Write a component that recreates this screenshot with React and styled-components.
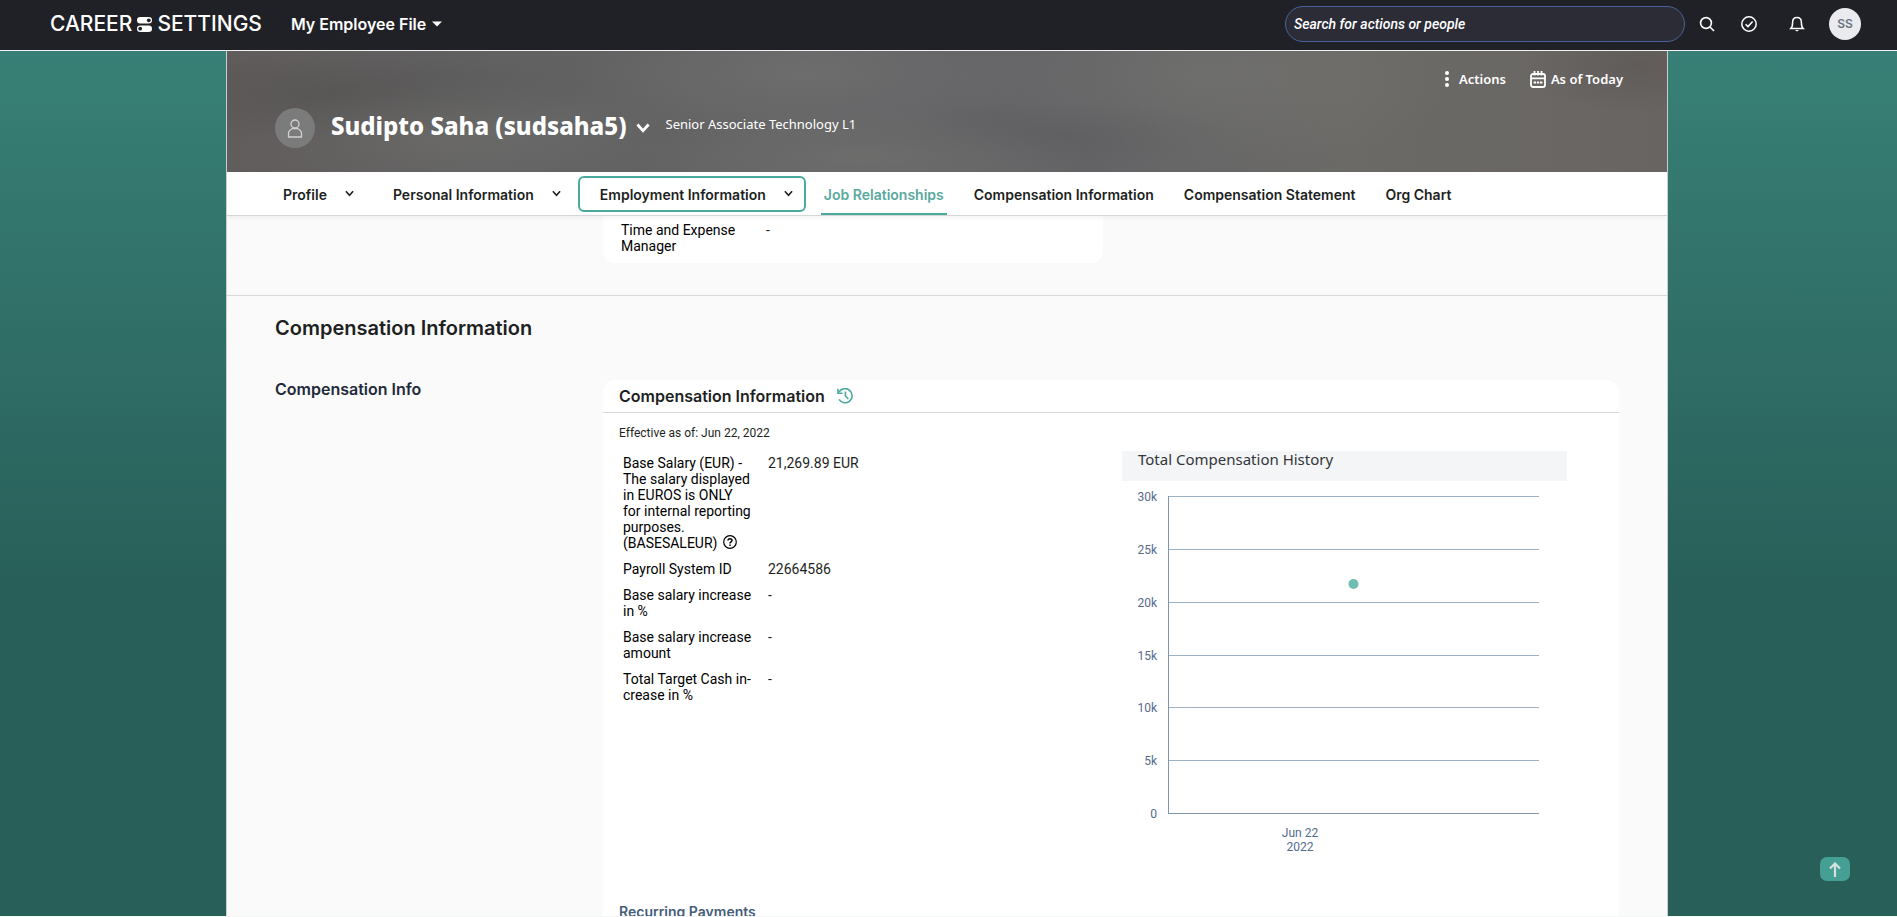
import React from "react";
import styled, { createGlobalStyle } from "styled-components";

const body = `Roboto, "Liberation Sans", sans-serif`;
const strong = `Inter, "Liberation Sans", sans-serif`;
const humanist = `"Noto Sans", "Open Sans", sans-serif`;
const teal = "#4aa99d";

const GlobalStyle = createGlobalStyle`
  * { box-sizing: border-box; }
  body { margin: 0; background: #f5f6f6; font-family: ${body}; color: #1d1f22; }
  h1, h2, h3, h4, p, dl, dd, dt, figure { margin: 0; font-weight: inherit; font-size: inherit; }
  button { border: 0; padding: 0; background: none; font: inherit; color: inherit; cursor: pointer; }
  svg { display: block; flex: none; }
`;

const Page = styled.div`
  height: 100vh;
  padding-bottom: 1px;
  display: flex;
  flex-direction: column;
  overflow: hidden;
`;

const Header = styled.header`
  flex: none;
  height: 51px;
  padding: 0 36px 2px 50px;
  display: flex;
  align-items: center;
  background: #202127;
  border-bottom: 1px solid #f2f2f2;
  color: #fff;
`;

const Logo = styled.a`
  display: flex;
  align-items: center;
  gap: 5px;
  color: #fff;
  text-decoration: none;
  font: 500 21px/24px ${strong};
`;

const ModuleButton = styled.button`
  margin-left: 29px;
  display: flex;
  align-items: center;
  gap: 6px;
  font: 600 16px/24px ${strong};
`;

const HeaderTools = styled.div`
  margin-left: auto;
  display: flex;
  align-items: center;
`;

const SearchInput = styled.input`
  width: 400px;
  height: 36px;
  margin-right: 6px;
  padding: 0 8px;
  border: 1px solid #4a629a;
  border-radius: 18px;
  background: #2c2c37;
  color: #fff;
  font: italic 500 14px/20px ${body};
  &::placeholder { color: #fff; opacity: 1; }
`;

const IconButton = styled.button`
  width: 32px;
  height: 32px;
  margin-right: ${(p) => p.$after}px;
  display: grid;
  place-items: center;
`;

const UserBadge = styled.button`
  width: 32px;
  height: 32px;
  border-radius: 50%;
  background: #e9ebee;
  color: #6a7280;
  font: 600 12px/32px ${strong};
`;

const Backdrop = styled.div`
  flex: 1;
  min-height: 0;
  padding: 0 229px 0 226px;
  background: linear-gradient(180deg, #388077 0%, #367c73 8%, #285f59 62%, #285f59 100%);
`;

const Panel = styled.main`
  height: 100%;
  overflow: hidden;
  border: solid #c9cfce;
  border-width: 0 1px;
  background: #fafafa;
`;

const Hero = styled.section`
  height: 121px;
  padding: 18px 44px 24px 48px;
  display: flex;
  flex-direction: column;
  justify-content: space-between;
  color: #fff;
  background:
    radial-gradient(ellipse 16% 60% at 40% 18%, rgba(132, 132, 130, 0.3), transparent),
    radial-gradient(ellipse 14% 50% at 17% 70%, rgba(126, 126, 122, 0.28), transparent),
    radial-gradient(ellipse 18% 40% at 8% 35%, rgba(74, 73, 72, 0.4), transparent),
    radial-gradient(ellipse 16% 40% at 44% 88%, rgba(124, 123, 118, 0.4), transparent),
    radial-gradient(ellipse 12% 30% at 58% 70%, rgba(84, 84, 86, 0.3), transparent),
    radial-gradient(ellipse 18% 80% at 68% 20%, rgba(124, 124, 118, 0.35), transparent),
    radial-gradient(ellipse 8% 40% at 98% 12%, rgba(84, 78, 76, 0.4), transparent),
    linear-gradient(90deg, #615d5c 0%, #626161 14%, #636365 40%, #646467 60%, #6b6a67 78%, #686461 100%);
`;

const HeroActions = styled.div`
  display: flex;
  justify-content: flex-end;
  gap: 24px;
`;

const HeroAction = styled.button`
  display: flex;
  align-items: center;
  gap: ${(p) => p.$gap}px;
  font: 600 13px/20px ${humanist};
`;

const Identity = styled.div`
  display: flex;
  align-items: center;
  height: 40px;
`;

const Avatar = styled.span`
  width: 40px;
  height: 40px;
  margin-right: 16px;
  border-radius: 50%;
  display: grid;
  place-items: center;
  background: #7b7b7b;
`;

const Name = styled.h1`
  font: 800 24px/36px ${humanist};
  padding-bottom: 4px;
`;

const NameMenu = styled.button`
  margin: 0 16px 0 9px;
`;

const Role = styled.p`
  font: 400 13px/20px ${humanist};
  padding-bottom: 8px;
`;

const Tabs = styled.nav`
  position: relative;
  height: 44px;
  padding: 4px 0 0 34px;
  display: flex;
  align-items: flex-start;
  background: #fff;
  border-bottom: 1px solid #d6d6d6;
  box-shadow: 0 2px 4px rgba(0, 0, 0, 0.05);
  font: 600 14px/20px ${strong};
  color: #1d1f22;
`;

const MenuTab = styled.button`
  height: 36px;
  padding: 2px 11px 0 20px;
  margin-right: ${(p) => (p.$focused ? 15 : 4)}px;
  display: flex;
  align-items: center;
  gap: 18px;
  border: 2px solid ${(p) => (p.$focused ? teal : "transparent")};
  border-radius: 6px;
  svg { margin-bottom: 3px; }
`;

const LinkTab = styled.a`
  height: 39px;
  padding: 9px 3px 0;
  margin-right: 24px;
  color: ${(p) => (p.$current ? "#5aa99e" : "inherit")};
  border-bottom: 2px solid ${(p) => (p.$current ? teal : "transparent")};
  text-decoration: none;
`;

const Section = styled.section`
  display: grid;
  grid-template-columns: 328px 1fr;
  padding: 0 48px;
`;

const PreviousSection = styled(Section)`
  height: 80px;
  border-bottom: 1px solid #d9d9d9;
`;

const SmallCard = styled.div`
  grid-column: 2;
  width: 500px;
  height: 47px;
  padding: 6px 18px;
  background: #fff;
  border-radius: 0 0 12px 12px;
`;

const FieldList = styled.dl`
  display: grid;
  grid-template-columns: 129px auto;
  justify-content: start;
  gap: 10px 16px;
  font: 400 14px/16px ${body};
  dt { color: #000; }
`;

const HelpButton = styled.button`
  display: inline-block;
  vertical-align: top;
  margin-left: 6px;
`;

const SectionTitle = styled.h2`
  padding: 20px 48px 40px;
  font: 600 20px/24px ${strong};
`;

const SubTitle = styled.h3`
  font: 600 16px/18px ${strong};
  color: #22293a;
`;

const Card = styled.article`
  background: #fff;
  border-radius: 12px 12px 0 0;
`;

const CardHeader = styled.header`
  height: 33px;
  padding: 0 16px;
  display: flex;
  align-items: center;
  gap: 12px;
  border-bottom: 1px solid #d9d9d9;
  font: 600 16px/20px ${strong};
`;

const CardBody = styled.div`
  padding: 12px 52px 24px 16px;
`;

const Effective = styled.p`
  font: 400 12px/16px ${body};
`;

const Columns = styled.div`
  display: flex;
  justify-content: space-between;
  padding: 10px 0 0 4px;
`;

const Fields = styled.div`
  padding-top: 4px;
`;

const Chart = styled.figure`
  width: 445px;
`;

const ChartTitle = styled.figcaption`
  height: 30px;
  padding-left: 16px;
  background: #f4f5f7;
  color: #32363a;
  font: 400 15px/16px ${humanist};
`;

const Plot = styled.svg`
  font: 400 12px ${body};
  fill: #556b8d;
`;

const NextTitle = styled.h4`
  padding-top: 37px;
  font: 600 14px/20px ${strong};
  color: #475e7c;
`;

const ToTop = styled.button`
  position: fixed;
  right: 47px;
  bottom: 36px;
  width: 30px;
  height: 24px;
  border-radius: 7px;
  display: grid;
  place-items: center;
  background: #469f95;
`;

const Chevron = ({ size = 9, weight = 1.8 }) => (
  <svg width={size} height={size} viewBox="0 0 10 10" fill="none" stroke="currentColor" strokeWidth={weight}>
    <path d="M1 2.5 L5 6.9 L9 2.5" />
  </svg>
);

const Toggles = () => (
  <svg width="15" height="15" viewBox="0 0 15 15">
    <rect x="0" y="0" width="15" height="6.6" rx="3.3" fill="#fff" />
    <circle cx="11.8" cy="3.3" r="1.9" fill="#202127" />
    <rect x="0" y="8.4" width="15" height="6.6" rx="3.3" fill="#fff" />
    <circle cx="3.2" cy="11.7" r="1.9" fill="#202127" />
  </svg>
);

const ticks = [
  ["30k", 15], ["25k", 68], ["20k", 121], ["15k", 174], ["10k", 226], ["5k", 279], ["0", 332],
];

const HistoryChart = () => (
  <Chart>
    <ChartTitle>Total Compensation History</ChartTitle>
    <Plot width="445" height="384" viewBox="0 0 445 384" role="img" aria-label="Total compensation over time">
      {ticks.map(([label, y]) => (
        <g key={label}>
          <text x="35" y={y + 5} textAnchor="end">{label}</text>
          <path d={`M46 ${y + 0.5}H417`} stroke={label === "0" ? "#8794ad" : "#9fb2c5"} />
        </g>
      ))}
      <path d="M46.5 15V333" stroke="#7f95b2" />
      <circle cx="231.5" cy="103" r="5" fill="#6fbcb3" />
      <text x="178" y="356" textAnchor="middle">Jun 22</text>
      <text x="178" y="370" textAnchor="middle">2022</text>
    </Plot>
  </Chart>
);

export default function App() {
  return (
    <Page>
      <GlobalStyle />
      <Header>
        <Logo href="#home">CAREER<Toggles />SETTINGS</Logo>
        <ModuleButton>
          My Employee File
          <svg width="10" height="6" viewBox="0 0 10 6"><path d="M0 0.5H10L5 5.5Z" fill="#fff" /></svg>
        </ModuleButton>
        <HeaderTools>
          <SearchInput type="search" aria-label="Search" placeholder="Search for actions or people" />
          <IconButton aria-label="Search" $after={10}>
            <svg width="16" height="16" viewBox="0 0 16 16" fill="none" stroke="#fff" strokeWidth="1.6">
              <circle cx="7" cy="7" r="5.4" /><path d="M11 11L15 15" />
            </svg>
          </IconButton>
          <IconButton aria-label="To do" $after={16}>
            <svg width="16" height="16" viewBox="0 0 16 16" fill="none" stroke="#fff" strokeWidth="1.5">
              <circle cx="8" cy="8" r="7.2" /><path d="M4.6 8.2L7 10.6L11.6 5.6" />
            </svg>
          </IconButton>
          <IconButton aria-label="Notifications" $after={16}>
            <svg width="16" height="16" viewBox="0 0 16 16" fill="none" stroke="#fff" strokeWidth="1.5">
              <path d="M1.8 12.6C3.4 11.2 3.6 9.6 3.6 6.4C3.6 3.4 5.4 1.6 8 1.6S12.4 3.4 12.4 6.4C12.4 9.6 12.6 11.2 14.2 12.6Z" />
              <path d="M6 14H10L8 15.6Z" fill="#fff" stroke="none" />
            </svg>
          </IconButton>
          <UserBadge aria-label="Account">SS</UserBadge>
        </HeaderTools>
      </Header>
      <Backdrop>
        <Panel>
          <Hero>
            <HeroActions>
              <HeroAction $gap={10}>
                <svg width="4" height="16" viewBox="0 0 4 16" fill="#fff">
                  <circle cx="2" cy="2" r="2" /><circle cx="2" cy="8" r="2" /><circle cx="2" cy="14" r="2" />
                </svg>
                Actions
              </HeroAction>
              <HeroAction $gap={5}>
                <svg width="16" height="17" viewBox="0 0 16 17" fill="none" stroke="#fff" strokeWidth="1.8">
                  <rect x="1" y="3" width="14" height="13" rx="2" />
                  <path d="M1 7.4H15M4.5 0V4.5M8 0V4.5M11.5 0V4.5" />
                  <path d="M3.6 11.4H6M6.8 11.4H9.2M10 11.4H12.4" strokeWidth="2" />
                </svg>
                As of Today
              </HeroAction>
            </HeroActions>
            <Identity>
              <Avatar>
                <svg width="16" height="19" viewBox="0 0 16 19" fill="none" stroke="#d2d2d2" strokeWidth="1.3">
                  <circle cx="8" cy="5" r="4" />
                  <path d="M1.5 18V14.5C1.5 11.5 3.5 10.5 5.5 9.5H10.5C12.5 10.5 14.5 11.5 14.5 14.5V18Z" />
                </svg>
              </Avatar>
              <Name>Sudipto Saha (sudsaha5)</Name>
              <NameMenu aria-label="Choose person"><Chevron size={14} weight={2} /></NameMenu>
              <Role>Senior Associate Technology L1</Role>
            </Identity>
          </Hero>
          <Tabs>
            <MenuTab>Profile<Chevron /></MenuTab>
            <MenuTab>Personal Information<Chevron /></MenuTab>
            <MenuTab $focused>Employment Information<Chevron /></MenuTab>
            <LinkTab href="#relationships" $current>Job Relationships</LinkTab>
            <LinkTab href="#compensation">Compensation Information</LinkTab>
            <LinkTab href="#statement">Compensation Statement</LinkTab>
            <LinkTab href="#org">Org Chart</LinkTab>
          </Tabs>
          <PreviousSection>
            <SmallCard>
              <FieldList>
                <dt>Time and Expense Manager</dt><dd>-</dd>
              </FieldList>
            </SmallCard>
          </PreviousSection>
          <SectionTitle>Compensation Information</SectionTitle>
          <Section>
            <SubTitle>Compensation Info</SubTitle>
            <Card>
              <CardHeader>
                <h3>Compensation Information</h3>
                <button aria-label="History">
                  <svg width="17" height="16" viewBox="0 0 17 16" fill="none" stroke={teal} strokeWidth="1.6">
                    <path d="M2 4A7.1 7.1 0 1 1 2 11.4" />
                    <path d="M1 0.8V5.2H5.6" />
                    <path d="M8.4 3.6V8L11.4 11" />
                  </svg>
                </button>
              </CardHeader>
              <CardBody>
                <Effective>Effective as of: Jun 22, 2022</Effective>
                <Columns>
                  <Fields>
                    <FieldList>
                      <dt>
                        Base Salary (EUR) - The salary displayed in EUROS is ONLY for internal reporting purposes. (BASESALEUR)
                        <HelpButton aria-label="Help">
                          <svg width="14" height="14" viewBox="0 0 14 14" fill="none" stroke="#000" strokeWidth="1.2">
                            <circle cx="7" cy="7" r="6.3" />
                            <path d="M5 5.6C5 3.2 9 3.2 9 5.4C9 6.8 7 6.8 7 8.4M7 9.6V11" strokeWidth="1.5" />
                          </svg>
                        </HelpButton>
                      </dt>
                      <dd>21,269.89 EUR</dd>
                      <dt>Payroll System ID</dt><dd>22664586</dd>
                      <dt>Base salary increase in %</dt><dd>-</dd>
                      <dt>Base salary increase amount</dt><dd>-</dd>
                      <dt>Total Target Cash in&shy;crease in %</dt><dd>-</dd>
                    </FieldList>
                  </Fields>
                  <HistoryChart />
                </Columns>
                <NextTitle>Recurring Payments</NextTitle>
              </CardBody>
            </Card>
          </Section>
        </Panel>
      </Backdrop>
      <ToTop aria-label="Back to top">
        <svg width="12" height="15" viewBox="0 0 12 15" fill="none" stroke="#d5e2e0" strokeWidth="2.2">
          <path d="M6 15V2M1 6.5L6 1.5L11 6.5" />
        </svg>
      </ToTop>
    </Page>
  );
}
